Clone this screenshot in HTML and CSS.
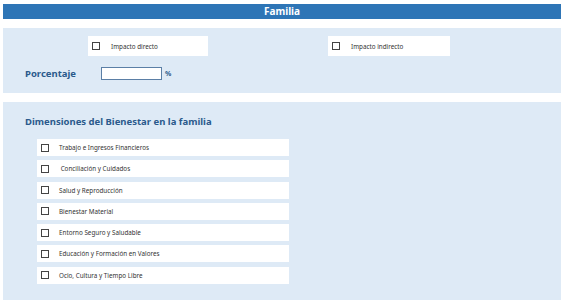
FILE: index.html
```html
<!DOCTYPE html>
<html lang="es">
<head>
  <meta charset="UTF-8" />
  <title>Familia</title>
  <link rel="stylesheet" href="styles.css">
</head>
<body>
  <div class="header-bar">Familia</div>

  <div class="panel panel-impact">
    <div class="impact-options">
      <label class="option option-direct"><span class="box"></span>Impacto directo</label>
      <label class="option option-indirect"><span class="box"></span>Impacto indirecto</label>
    </div>
    <div class="percent-row">
      <span class="percent-label">Porcentaje</span>
      <span class="percent-input"></span>
      <span class="percent-sign">%</span>
    </div>
  </div>

  <div class="panel panel-dimensions">
    <h2 class="section-title">Dimensiones del Bienestar en la familia</h2>
    <div class="dimension-list">
      <label class="dimension"><span class="box"></span>Trabajo e Ingresos Financieros</label>
      <label class="dimension"><span class="box"></span>&nbsp;Conciliación y Cuidados</label>
      <label class="dimension"><span class="box"></span>Salud y Reproducción</label>
      <label class="dimension"><span class="box"></span>Bienestar Material</label>
      <label class="dimension"><span class="box"></span>Entorno Seguro y Saludable</label>
      <label class="dimension"><span class="box"></span>Educación y Formación en Valores</label>
      <label class="dimension"><span class="box"></span>Ocio, Cultura y Tiempo Libre</label>
    </div>
  </div>
</body>
</html>
```

FILE: styles.css
```css
body {
  margin: 0;
  padding: 4px 6px 0 3px;
  font-family: "Noto Sans", "Open Sans", sans-serif;
  background: #ffffff;
  color: #222;
}

.header-bar {
  height: 15px;
  background: #2e75b6;
  color: white;
  font-weight: bold;
  font-size: 10px;
  line-height: 15px;
  text-align: center;
}

.panel {
  background: #deeaf6;
  margin-top: 9px;
}

.panel-impact {
  height: 65px;
  padding-top: 8px;
  box-sizing: border-box;
}

.impact-options {
  display: flex;
  padding-left: 85px;
}

.option {
  display: flex;
  align-items: center;
  height: 20px;
  background: white;
  font-size: 6.3px;
  color: #333;
}

.option-direct {
  width: 120px;
}

.option-indirect {
  width: 122px;
  margin-left: 120px;
}

.box {
  width: 6px;
  height: 6px;
  border: 1px solid #444;
  margin: 0 11px 0 4px;
  flex-shrink: 0;
}

.percent-row {
  display: flex;
  align-items: center;
  margin-top: 11px;
  padding-left: 22px;
}

.percent-label {
  width: 76px;
  font-weight: bold;
  font-size: 9.5px;
  color: #2b5a8c;
}

.percent-input {
  width: 61px;
  height: 13px;
  background: white;
  border: 1px solid #5b7fa6;
  box-sizing: border-box;
}

.percent-sign {
  margin-left: 3px;
  font-size: 7px;
  font-weight: bold;
  color: #2b5a8c;
}

.panel-dimensions {
  height: 198px;
  padding: 13px 0 0 22px;
  box-sizing: border-box;
}

.section-title {
  margin: 0;
  font-size: 9.5px;
  line-height: 14px;
  color: #2b5a8c;
}

.dimension-list {
  display: flex;
  flex-direction: column;
  gap: 4.3px;
  margin: 10px 0 0 12px;
  width: 252px;
}

.dimension {
  display: flex;
  align-items: center;
  height: 17px;
  background: white;
  font-size: 6.3px;
  color: #333;
}

.dimension .box {
  margin: 0 10px 0 4px;
}
```
